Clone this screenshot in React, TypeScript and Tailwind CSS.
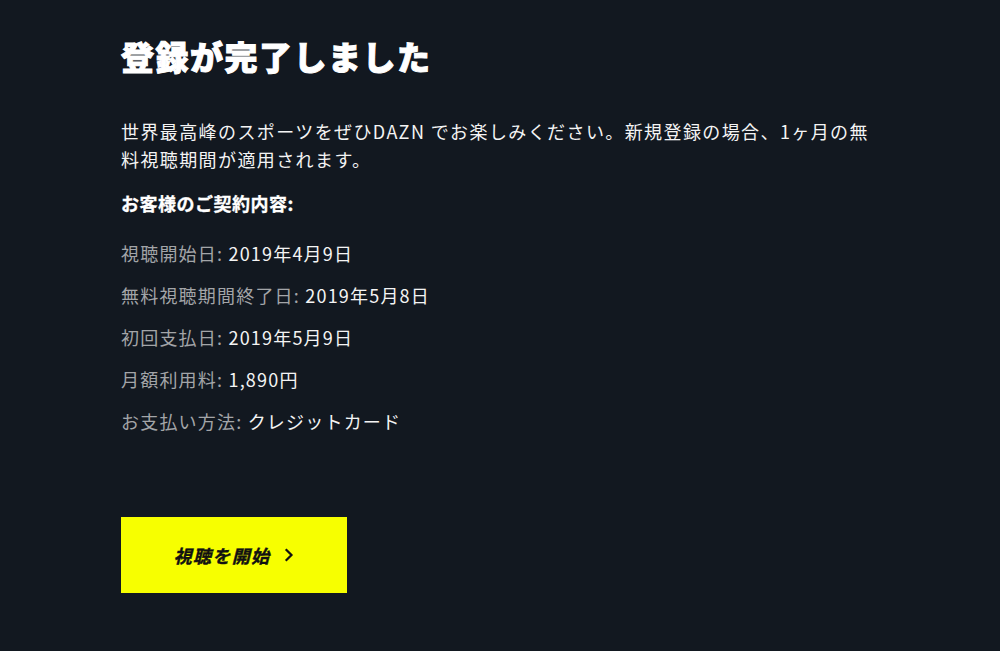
import React from "react";

const rows: [string, string][] = [
  ["視聴開始日:", "2019年4月9日"],
  ["無料視聴期間終了日:", "2019年5月8日"],
  ["初回支払日:", "2019年5月9日"],
  ["月額利用料:", "1,890円"],
  ["お支払い方法:", "クレジットカード"],
];

export default function App() {
  return (
    <div
      className="min-h-[651px] w-full bg-[#121820] text-[#f4f4f4]"
      style={{ fontFamily: '"Noto Sans CJK JP", "Noto Sans", sans-serif' }}
    >
      <div className="pl-[121px] pt-[36px] pb-[58px]">
        <h1 className="text-[33px] leading-[41px] font-black tracking-[1.5px] text-white [-webkit-text-stroke:1px_white]">
          登録が完了しました
        </h1>
        <p className="mt-[40px] w-[760px] text-[18px] leading-[28px] tracking-[1.4px]">
          世界最高峰のスポーツをぜひDAZN でお楽しみください。新規登録の場合、1ヶ月の無料視聴期間が適用されます。
        </p>
        <p className="mt-[16px] text-[18px] leading-[28px] font-bold tracking-[0.5px] text-white [-webkit-text-stroke:0.3px_white]">
          お客様のご契約内容:
        </p>
        <div className="mt-[22px] flex flex-col gap-[14px]">
          {rows.map(([k, v]) => (
            <div key={k} className="text-[18px] leading-[28px] tracking-[1.2px]">
              <span className="text-[#a3a5a8]">{k}</span>{" "}
              <span className="text-[#f4f4f4]">{v}</span>
            </div>
          ))}
        </div>
        <button className="mt-[82px] flex h-[76px] w-[226px] items-center justify-center gap-[14px] bg-[#f7ff00] text-[#111111]">
          <span className="text-[18px] font-bold italic tracking-[1.3px] [-webkit-text-stroke:0.4px_#111]">
            視聴を開始
          </span>
          <svg width="10" height="14" viewBox="0 0 10 14" fill="none">
            <polyline
              points="2.5,2 7.5,7 2.5,12"
              stroke="#111"
              strokeWidth="2.2"
              strokeLinecap="square"
            />
          </svg>
        </button>
      </div>
    </div>
  );
}
